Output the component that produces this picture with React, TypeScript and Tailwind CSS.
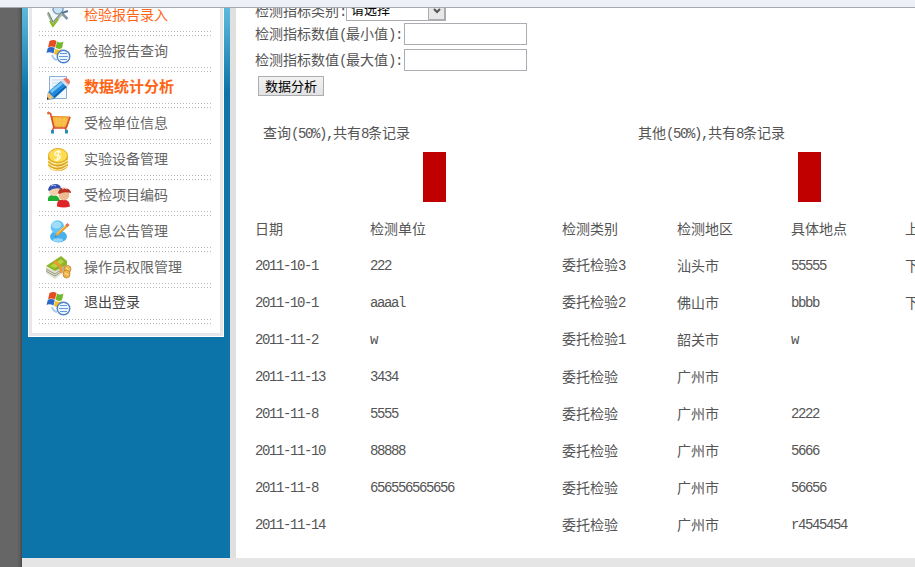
import React from "react";

const CJK = "font-['Noto_Sans_CJK_SC',sans-serif]";

// Half-width characters take exactly half of a full-width cell.
function Txt({ children }: { children: string }) {
  const runs = children.match(/[\x20-\x7e]+|[^\x20-\x7e]+/g) ?? [];
  return (
    <>
      {runs.map((run, i) =>
        /^[\x20-\x7e]/.test(run) ? (
          <span key={i} className="font-['Liberation_Mono',monospace] tracking-[-1.4px]">
            {run}
          </span>
        ) : (
          <span key={i}>{run}</span>
        ),
      )}
    </>
  );
}

function ReportEntryIcon() {
  return (
    <svg width="26" height="26" viewBox="0 0 26 26" fill="none">
      <path d="M3 5l6 1 11-2-4 13-9 6z" fill="#f2f6f8" />
      <circle cx="12" cy="6" r="5" fill="#c7e3f7" stroke="#829eb5" strokeWidth="1.5" />
      <path d="M15.500 10l6 6" stroke="#8194a4" strokeWidth="2.500" />
      <path d="M2 10l5 11 9-11" stroke="#a9b8a0" strokeWidth="2.800" />
      <path d="M2 9l5 10 9-10" stroke="#718579" strokeWidth="1" />
      <path d="M16 10l6-2" stroke="#56779c" strokeWidth="2" />
      <path d="M4 18l3 5 5-7" stroke="#87bd20" strokeWidth="2" />
    </svg>
  );
}

function WindowsIcon() {
  return (
    <svg width="26" height="26" viewBox="0 0 26 26" fill="none">
      <path d="M3.500 2q4-2 7 0L9 8.500q-4-2-7 0z" fill="#e54d20" />
      <path d="M11 2.500q3 2 6.500 0l-1.500 6.500q-3 2-6.500-.2z" fill="#72b82b" />
      <path d="M1.700 9.200q3-2 7-.3L7.500 14.500q-4-2-7-.5z" fill="#2b68c9" />
      <path d="M9.300 9.700q3 2 6.500.2L14.500 15.500q-3.500 1.500-6.500-.5z" fill="#f5bd25" />
      <circle cx="17.500" cy="17.500" r="6.300" fill="#edf6ff" stroke="#4b82cd" strokeWidth="1.400" />
      <path d="M14 14.500h7M13 17.500h9M14 20.500h7" stroke="#6999d9" />
      <path d="M6 16q1 4 5 5" stroke="#a9caec" strokeWidth="2" />
    </svg>
  );
}

function NoteIcon() {
  return (
    <svg width="26" height="26" viewBox="0 0 26 26" fill="none">
      <path d="M3.500 1.500h17v22h-17z" fill="#f2f8ff" stroke="#8caed2" />
      <path d="M6 5h10M6 8h8M6 11h5" stroke="#c6d9ec" />
      <path d="M2 17L15 6l6 6L8 24l-7 1z" fill="#2489da" />
      <path d="M5 17L16 8" stroke="#79c8f8" strokeWidth="2.500" />
      <path d="M8 22L20 11.500" stroke="#0b5dac" strokeWidth="1.500" />
      <path d="M16 5l3-2q5 0 5 5l-3 3z" fill="#ed7664" />
      <path d="M15 6l2-2 6 6-2 2z" fill="#d8dee4" />
      <path d="M2 17l6 6-7 2z" fill="#f2c178" />
      <path d="M1 22l2 2-2 1z" fill="#26384c" />
    </svg>
  );
}

function CartIcon() {
  return (
    <svg width="26" height="26" viewBox="0 0 26 26" fill="none">
      <path d="M6 5.500L24 6l-3 10H8z" fill="#f7b83e" stroke="#df8424" />
      <path d="M10 6l1.500 10M14 6v10M19 6l-2 10M7 9h16M8 12h14" stroke="#fbc95e" strokeWidth=".7" />
      <path d="M2 1.500l2.500 1L8 17h12l4-11M8 16l-2 4M19 17l2 4" stroke="#d6502a" strokeWidth="1.600" />
      <circle cx="2.500" cy="2" r="1.500" fill="#e46b31" />
      <path d="M6.500 19v3.500M20.500 19v3.500" stroke="#278dbb" strokeWidth="3" />
    </svg>
  );
}

function CoinIcon() {
  return (
    <svg width="26" height="26" viewBox="0 0 26 26" fill="none">
      <path d="M2 9v9c1 8 19 8 20 0V9z" fill="#e6af2c" />
      <path d="M2 13q9 8 20 0M2 16q9 8 20 0M2 19q9 8 19 0" stroke="#fff0a0" strokeWidth="1.200" />
      <path d="M3 15q9 8 18 0M3 18q9 8 18 0" stroke="#c9942a" strokeWidth=".7" />
      <ellipse cx="12" cy="8.500" rx="9.500" ry="7" fill="#ffdb4e" stroke="#d9ad27" />
      <path d="M15 5.500q-5-2-6 .5t3 2.500 1.500 3-5 1M13 3l-2 11" stroke="#fffbe0" strokeWidth="1.500" />
    </svg>
  );
}

function UsersIcon() {
  return (
    <svg width="26" height="26" viewBox="0 0 26 26" fill="none">
      <path d="M2 18q-1-6 5-6t7 6z" fill="#20ad32" />
      <circle cx="8" cy="8" r="5" fill="#f0d0ac" />
      <path d="M2 7q1-6 7-6t6 5Q8 4 3 8z" fill="#344fae" />
      <path d="M5 3q3-2 5 0" stroke="#b1c9ff" />
      <path d="M11 23.500q-1-7 6-7t7 7q-6 2-13 0z" fill="#de2428" />
      <circle cx="18" cy="12" r="5.300" fill="#f0bb91" />
      <path d="M12 10q1-6 7-5t6 5q-7-2-12 1z" fill="#b93325" />
      <path d="M16 6q3-2 5 0" stroke="#ffd1c2" />
    </svg>
  );
}

function ProfileIcon() {
  return (
    <svg width="26" height="26" viewBox="0 0 26 26" fill="none">
      <ellipse cx="12.500" cy="17.500" rx="8.500" ry="6" fill="#48b0ec" />
      <circle cx="11.500" cy="8" r="6.800" fill="#65c5f5" />
      <ellipse cx="10.500" cy="6" rx="4.500" ry="3.500" fill="#a3dcf9" />
      <ellipse cx="12" cy="21" rx="5" ry="1.800" fill="#94d8fb" />
      <path d="M10.500 16L21 6.500" stroke="#e99b30" strokeWidth="3" />
      <path d="M10.500 15L20 6.500" stroke="#ffdc72" />
      <path d="M20.500 7l2-2" stroke="#dd6d56" strokeWidth="3" />
      <path d="M9.500 17l-1 1 3-1z" fill="#674b34" />
    </svg>
  );
}

function MoneyIcon() {
  return (
    <svg width="26" height="26" viewBox="0 0 26 26" fill="none">
      <path d="M0 12v6l9 6 10-8v-6L9 16z" fill="#dedfce" />
      <path d="M0 14l9 5 10-7M0 16l9 5 10-7" stroke="#878e76" strokeWidth=".8" />
      <path d="M0 11L15 1l6 5v4L9 16z" fill="#8cb629" />
      <path d="M4 11l11-7 3 3-9 6z" fill="#b7d43e" />
      <path d="M8 6l7 6v6" stroke="#f19731" strokeWidth="2.800" />
      <ellipse cx="21.500" cy="14" rx="3.500" ry="3.500" fill="#f1bb4f" stroke="#b87827" strokeWidth=".7" />
      <ellipse cx="20.500" cy="19" rx="3.500" ry="4" fill="#edb448" stroke="#b87827" strokeWidth=".7" />
      <path d="M18.500 18l4 2M20 13l3 2" stroke="#ffe4a0" />
    </svg>
  );
}

const menu = [
  { label: "检验报告录入", icon: <ReportEntryIcon />, style: "pb-[3px] text-[#ff6414]" },
  { label: "检验报告查询", icon: <WindowsIcon />, style: "pb-[3px] text-[#666]" },
  { label: "数据统计分析", icon: <NoteIcon />, style: "pb-[3px] text-[#ff6414] text-[15px] font-bold" },
  { label: "受检单位信息", icon: <CartIcon />, style: "pb-[3px] text-[#666]" },
  { label: "实验设备管理", icon: <CoinIcon />, style: "pb-[3px] text-[#666]" },
  { label: "受检项目编码", icon: <UsersIcon />, style: "pb-[3px] text-[#666]" },
  { label: "信息公告管理", icon: <ProfileIcon />, style: "pb-[3px] text-[#666]" },
  { label: "操作员权限管理", icon: <MoneyIcon />, style: "pb-[3px] text-[#666]" },
  { label: "退出登录", icon: <WindowsIcon />, style: "pb-[5px] text-[#444]" },
];

const rows = [
  ["日期", "检测单位", "检测类别", "检测地区", "具体地点", "上"],
  ["2011-10-1", "222", "委托检验3", "汕头市", "55555", "下"],
  ["2011-10-1", "aaaal", "委托检验2", "佛山市", "bbbb", "下"],
  ["2011-11-2", "w", "委托检验1", "韶关市", "w", ""],
  ["2011-11-13", "3434", "委托检验", "广州市", "", ""],
  ["2011-11-8", "5555", "委托检验", "广州市", "2222", ""],
  ["2011-11-10", "88888", "委托检验", "广州市", "5666", ""],
  ["2011-11-8", "656556565656", "委托检验", "广州市", "56656", ""],
  ["2011-11-14", "", "委托检验", "广州市", "r4545454", ""],
];

const DOTS = "h-px bg-[repeating-linear-gradient(90deg,#b8b8b8_0_1px,transparent_1px_3px)]";

function Sidebar() {
  return (
    <aside className="h-[550px] w-[208px] shrink-0 bg-[#0c74a8] bg-[linear-gradient(#5ab9dc_0,#50b0d5_14px,#0c74a8_84px)] px-[6px]">
      <div className="h-[329px] border-x border-b border-white bg-white">
        <nav className="h-[328px] overflow-hidden border-x-[3px] border-b-[3px] border-[#e5e7eb] bg-white pr-[9px] pl-[7px]">
          <ul className="-mt-2">
            {menu.map((item) => (
              <li key={item.label} className="flex h-9 flex-col">
                <div className="flex h-[31px] items-center">
                  <span className="ml-[7px] w-[38px] shrink-0">{item.icon}</span>
                  <span className={`leading-[20px] whitespace-nowrap ${item.style}`}>{item.label}</span>
                </div>
                <div className={DOTS} />
                <div className={`mt-[3px] ${DOTS}`} />
              </li>
            ))}
          </ul>
        </nav>
      </div>
    </aside>
  );
}

function Field({ label }: { label: string }) {
  return (
    <label className="flex h-[26px] items-center">
      <span className="w-[149px] leading-[20px] whitespace-nowrap">
        <Txt>{label}</Txt>
      </span>
      <input className="h-[22px] w-[123px] border border-[#abadb3] bg-white outline-none" />
    </label>
  );
}

function Stat({ label }: { label: string }) {
  return (
    <div className="flex w-[375px] shrink-0 flex-col items-center">
      <div className="h-[20px] w-full pl-[8px] leading-[20px]">
        <Txt>{label}</Txt>
      </div>
      <div className="mt-[10px] ml-[-16px] h-[50px] w-[23px] bg-[#c00000]" />
    </div>
  );
}

export default function App() {
  return (
    <div className={`h-[567px] w-[915px] overflow-hidden bg-[#e5e5e5] text-[14px] text-[#555] ${CJK}`}>
      <header className="h-[8px] border-b border-[#a6a9ae] bg-[#edf1f7]" />
      <div className="flex h-[559px]">
        <div className="w-[22px] shrink-0 bg-[linear-gradient(90deg,#666_0,#666_17px,#5b5b5b_20px,#484848_22px)]" />
        <Sidebar />
        <div className="h-[550px] w-[6px] shrink-0 bg-[#e0e0e0]" />
        <main className="h-[550px] w-[679px] shrink-0 overflow-hidden bg-white pl-[19px]">
          <div className="mt-[-8px] flex h-[21px] items-center">
            <span className="w-[91px] leading-[20px] whitespace-nowrap">
              <Txt>检测指标类别:</Txt>
            </span>
            <div className="flex h-[20px] w-[100px] items-center justify-between border border-[#abadb3] bg-white pl-[4px] text-[13px] text-black">
              <span className="pb-[4px] leading-[18px]">请选择</span>
              <span className="flex h-full w-[17px] items-center justify-center border border-[#abadb3] bg-[#e8e8e8]">
                <svg width="8" height="6" viewBox="0 0 8 6">
                  <path d="M1 1l3 3 3-3" fill="none" stroke="#555" strokeWidth="2" />
                </svg>
              </span>
            </div>
          </div>
          <Field label="检测指标数值(最小值):" />
          <Field label="检测指标数值(最大值):" />
          <button className="mt-[3px] ml-[3px] block h-[20px] w-[66px] border border-[#abadb3] bg-linear-to-b from-[#f2f2f2] to-[#e2e2e2] text-[13px] leading-[18px] text-black">
            数据分析
          </button>
          <div className="mt-[26px] flex">
            <Stat label="查询(50%),共有8条记录" />
            <Stat label="其他(50%),共有8条记录" />
          </div>
          <div className="mt-[7px]">
            {rows.map((row, i) => (
              <div
                key={i}
                className="grid h-[37px] grid-cols-[115px_192px_115px_114px_114px_60px] items-center leading-[20px] whitespace-nowrap"
              >
                {row.map((cell, j) => (
                  <span key={j}>
                    <Txt>{cell}</Txt>
                  </span>
                ))}
              </div>
            ))}
          </div>
        </main>
      </div>
    </div>
  );
}
